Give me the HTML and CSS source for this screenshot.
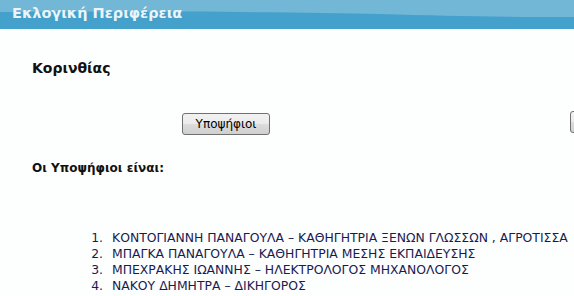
FILE: index.html
```html
<!DOCTYPE html>
<html>
<head>
    <title>Εκλογική Περιφέρεια</title>
    <link rel="stylesheet" href="styles.css">
</head>
<body>
    <div class="header">
        <svg class="wave" viewBox="0 0 574 29" preserveAspectRatio="none">
            <path d="M0 0 H574 V17 C500 17 450 16 380 14 C300 12 150 11 0 12 Z" fill="#73b7d7"/>
        </svg>
        <h1>Εκλογική Περιφέρεια</h1>
    </div>

    <div class="content">
        <h2>Κορινθίας</h2>

        <table class="actions">
            <tr>
                <td><button>Υποψήφιοι</button></td>
                <td><button aria-label="Αποτελέσματα"></button></td>
            </tr>
        </table>

        <h3>Οι Υποψήφιοι είναι:</h3>

        <ol class="candidates">
            <li>ΚΟΝΤΟΓΙΑΝΝΗ ΠΑΝΑΓΟΥΛΑ – ΚΑΘΗΓΗΤΡΙΑ ΞΕΝΩΝ ΓΛΩΣΣΩΝ , ΑΓΡΟΤΙΣΣΑ</li>
            <li>ΜΠΑΓΚΑ ΠΑΝΑΓΟΥΛΑ – ΚΑΘΗΓΗΤΡΙΑ ΜΕΣΗΣ ΕΚΠΑΙΔΕΥΣΗΣ</li>
            <li>ΜΠΕΧΡΑΚΗΣ ΙΩΑΝΝΗΣ – ΗΛΕΚΤΡΟΛΟΓΟΣ ΜΗΧΑΝΟΛΟΓΟΣ</li>
            <li>ΝΑΚΟΥ ΔΗΜΗΤΡΑ – ΔΙΚΗΓΟΡΟΣ</li>
        </ol>
    </div>
</body>
</html>
```

FILE: styles.css
```css
body {
    margin: 0;
    background: #fdfefe;
    font-family: "DejaVu Sans", Verdana, sans-serif;
    color: #111;
    overflow: hidden;
}

.header {
    position: relative;
    height: 29px;
    background: #44a1cb;
}

.wave {
    position: absolute;
    top: 0;
    left: 0;
    width: 100%;
    height: 29px;
}

.header h1 {
    position: relative;
    margin: 0;
    padding: 5px 0 0 12px;
    font-size: 14.5px;
    font-weight: bold;
    color: #eaf4f9;
}

.content {
    padding-left: 32px;
}

.content h2 {
    margin: 31px 0 0;
    font-size: 14px;
    font-weight: bold;
}

.actions {
    width: 776px;
    margin-top: 35px;
    border-collapse: collapse;
}

.actions td {
    width: 50%;
    padding: 0;
    text-align: center;
}

.actions button {
    width: 88px;
    height: 22px;
    padding: 0;
    font-family: "DejaVu Sans", Tahoma, sans-serif;
    font-size: 12px;
    color: #000;
    background: linear-gradient(#f2f2f2, #ebebeb 50%, #dddddd 51%, #cfcfcf);
    border: 1px solid #707070;
    border-radius: 3px;
}

.content h3 {
    margin: 25px 0 0;
    font-size: 12px;
    font-weight: bold;
}

.candidates {
    margin: 55px 0 0;
    padding-left: 75px;
    font-size: 12.4px;
    line-height: 16px;
    color: #1a1a50;
}

.candidates li {
    padding-left: 5px;
}
```
